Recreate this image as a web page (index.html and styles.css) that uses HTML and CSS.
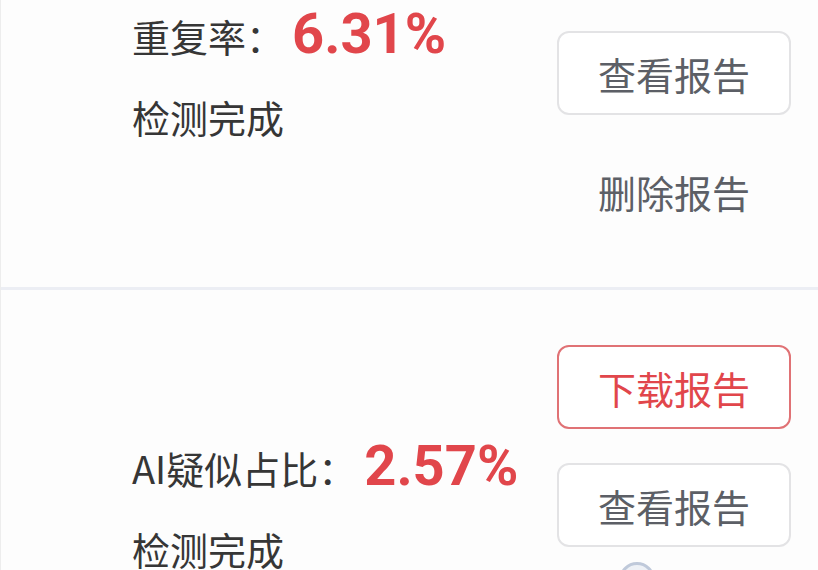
FILE: index.html
```html
<!DOCTYPE html>
<html lang="zh-CN">
<head>
    <meta charset="UTF-8">
    <meta name="viewport" content="width=device-width, initial-scale=1.0">
    <title>检测报告</title>
    <link rel="stylesheet" href="styles.css">
</head>
<body>
    <div class="list">
        <div class="report">
            <div class="info">
                <div class="rate"><span class="label">重复率：</span><span class="value">6.31%</span></div>
                <div class="status">检测完成</div>
            </div>
            <div class="actions">
                <button class="btn btn-red">下载报告</button>
                <button class="btn">查看报告</button>
                <button class="btn btn-text">删除报告</button>
            </div>
        </div>

        <div class="report">
            <div class="info">
                <div class="rate"><span class="label">AI疑似占比：</span><span class="value">2.57%</span></div>
                <div class="status">检测完成</div>
            </div>
            <div class="actions">
                <button class="btn btn-red">下载报告</button>
                <button class="btn">查看报告</button>
                <button class="btn btn-text">删除报告</button>
            </div>
        </div>
    </div>

    <!-- touch indicator from the screen recording -->
    <div class="touch"></div>
</body>
</html>
```

FILE: styles.css
```css
body {
    margin: 0;
    background-color: #fdfdfd;
    font-family: "Noto Sans CJK SC", "Noto Sans", sans-serif;
    overflow: hidden;
    height: 570px;
    position: relative;
}

/* list is scrolled a bit, first card starts above the top */
.list {
    margin-top: -142px;
    border-left: 1px solid #ededed;
}

.report {
    display: flex;
    justify-content: space-between;
    align-items: center;
    padding: 55px 27px 54px 131px;
    border-bottom: 3px solid #eceef4;
}

.info {
    display: flex;
    flex-direction: column;
    gap: 24px;
}

.rate {
    display: flex;
    align-items: center;
    height: 64px;
}

.label {
    font-size: 38px;
    color: #363636;
    line-height: 64px;
}

.value {
    margin-left: 8px;
    font-family: Roboto, "Liberation Sans", sans-serif;
    font-weight: bold;
    font-size: 56px;
    line-height: 64px;
    color: #e1464b;
    padding-bottom: 4px;
}

.status {
    font-size: 38px;
    line-height: 50px;
    height: 50px;
    color: #363636;
}

.actions {
    display: flex;
    flex-direction: column;
    gap: 34px;
}

.btn {
    width: 234px;
    height: 84px;
    box-sizing: border-box;
    border: 2px solid #e3e3e5;
    border-radius: 12px;
    background-color: #fff;
    font-family: "Noto Sans CJK SC", sans-serif;
    font-size: 38px;
    color: #5c5f66;
    padding: 0;
}

.btn-red {
    border-color: #e07275;
    color: #e1464b;
}

.btn-text {
    border-color: transparent;
    background: transparent;
}

.touch {
    position: absolute;
    left: 619px;
    top: 562px;
    width: 30px;
    height: 30px;
    border: 3px solid #bfc9da;
    border-radius: 50%;
    background-color: #eef1f6;
}
```
